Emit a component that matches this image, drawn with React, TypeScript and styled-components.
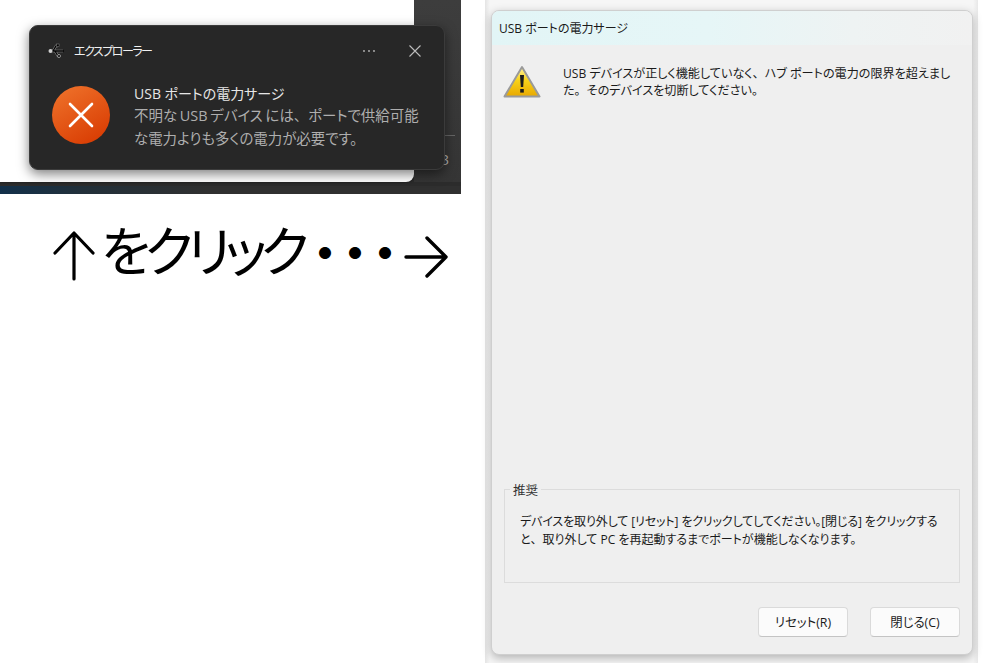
import { createGlobalStyle, styled } from 'styled-components';

const GlobalStyle = createGlobalStyle`
  html, body {
    margin: 0;
    padding: 0;
    background: #ffffff;
  }
  body {
    font-family: "Open Sans", "Noto Sans CJK JP", sans-serif;
    font-feature-settings: "palt";
  }
`;

const Page = styled.div`
  width: 999px;
  height: 663px;
  display: grid;
  grid-template-columns: 485px 493px;
  overflow: hidden;
`;

const LeftColumn = styled.div`
  display: flex;
  flex-direction: column;
`;

const Capture = styled.div`
  position: relative;
  width: 461px;
  height: 194px;
  display: flex;
  flex-direction: column;
  background: #2c2c2c;
`;

const CaptureMain = styled.div`
  flex: 1;
  display: flex;
  padding-bottom: 4px;
`;

const ExplorerWindow = styled.div`
  width: 414px;
  background: #ffffff;
  border-radius: 0 0 8px 0;
  box-shadow: 0 0 3px rgba(0, 0, 0, 0.5);
`;

const SidePane = styled.div`
  flex: 1;
  background: linear-gradient(#3d3d3d, #353535);
  display: flex;
  flex-direction: column;
  padding-top: 135px;
`;

const SideRule = styled.div`
  height: 1px;
  margin-right: 6px;
  background: #666666;
`;

const SideGlyph = styled.span`
  margin: 15px 0 0 27px;
  font-size: 14px;
  line-height: 18px;
  color: #b5b5b5;
`;

const Taskbar = styled.div`
  height: 8px;
  background: linear-gradient(90deg, #12304a 0, #22303a 18%, #303030 45%, #303030);
`;

const Toast = styled.div`
  position: absolute;
  left: 29px;
  top: 25px;
  width: 416px;
  height: 145px;
  box-sizing: border-box;
  padding: 13px 22px 0 18px;
  background: #272727;
  border: 1px solid #3b3b3b;
  border-radius: 9px;
  box-shadow: 0 4px 12px rgba(0, 0, 0, 0.5);
  display: flex;
  flex-direction: column;
`;

const ToastHeader = styled.div`
  display: flex;
  align-items: center;
  height: 24px;
  color: #f0f0f0;
  font-size: 12px;
`;

const AppName = styled.span`
  margin-left: 10px;
  flex: 1;
  letter-spacing: -1.5px;
`;

const ToastAction = styled.span`
  display: flex;
  width: 14px;
  margin-left: 32px;
  justify-content: center;
  color: #b8b8b8;
`;

const ToastBody = styled.div`
  display: flex;
  margin-top: 23px;
  padding-left: 4px;
  gap: 24px;
`;

const ToastCopy = styled.div`
  margin-top: -3px;
  white-space: nowrap;
`;

const ToastTitle = styled.div`
  color: #e6e6e6;
  font-size: 14px;
  line-height: 21px;
`;

const ToastText = styled.div`
  color: #aeaeae;
  font-size: 14.45px;
  line-height: 23px;
  word-spacing: -1px;
`;

const Punct = styled.span`
  font-feature-settings: normal;
`;

const Caption = styled.div`
  display: flex;
  align-items: flex-start;
  margin: 27px 0 0 52px;
  height: 60px;
  color: #000000;
  white-space: nowrap;
`;

const CaptionArrow = styled.svg<{ $top: number; $left: number }>`
  flex: none;
  margin-top: ${(p) => p.$top}px;
  margin-left: ${(p) => p.$left}px;
`;

const CaptionText = styled.span`
  margin-left: 5px;
  font-size: 54px;
  line-height: 60px;
  letter-spacing: -6.4px;
  font-weight: 400;
`;

const Dots = styled.span`
  margin-left: -1px;
  font-feature-settings: normal;
  letter-spacing: -17px;
  font-size: 47px;
  line-height: 64px;
  font-weight: 700;
`;

const Backdrop = styled.div`
  height: 663px;
  box-sizing: border-box;
  padding: 10px 5px 8px 6px;
  background: linear-gradient(90deg, #e4e4e4 0, #f6f6f6 1%, #f6f6f6 99%, #e8e8e8);
`;

const Dialog = styled.div`
  height: 645px;
  box-sizing: border-box;
  border: 1px solid #cfcfcf;
  border-radius: 8px;
  background: #efefef;
  box-shadow: 0 3px 10px rgba(0, 0, 0, 0.28);
  overflow: hidden;
  display: flex;
  flex-direction: column;
  color: #1a1a1a;
  font-size: 12px;
`;

const TitleBar = styled.div`
  height: 33px;
  flex: none;
  padding: 0 0 1px 7px;
  display: flex;
  align-items: center;
  background: linear-gradient(90deg, #e2f5f6 0, #e6f6f7 45%, #eef3f3 75%, #f1f1f1);
`;

const Message = styled.div`
  display: flex;
  flex: 1;
  padding: 20px 0 0 11px;
  gap: 22px;
`;

const MessageText = styled.div`
  font-size: 12.1px;
  line-height: 17px;
  white-space: nowrap;
`;

const Group = styled.fieldset`
  margin: 0 12px;
  height: 102px;
  box-sizing: border-box;
  padding: 16px 15px 0 15px;
  border: 1px solid #dcdcdc;
  font-size: 12px;
  line-height: 18px;
  white-space: nowrap;
`;

const GroupLegend = styled.legend`
  margin-left: -10px;
  padding: 0 3px;
  font-size: 12.5px;
  line-height: 16px;
  color: #333333;
  transform: translateY(2px);
`;

const GroupLine = styled.div<{ $tight?: boolean }>`
  letter-spacing: ${(p) => (p.$tight ? '-0.12px' : '0')};
`;

const Footer = styled.div`
  display: flex;
  justify-content: flex-end;
  gap: 22px;
  padding: 24px 12px 17px 0;
`;

const DialogButton = styled.button`
  width: 90px;
  height: 30px;
  padding: 0;
  background: #fbfbfb;
  border: 1px solid #dadada;
  border-bottom-color: #c4c4c4;
  border-radius: 4px;
  font: inherit;
  font-size: 12.4px;
  color: #1a1a1a;
`;

const IconSvg = styled.svg`
  flex: none;
`;

const UsbIcon = () => (
  <IconSvg width="16" height="16" viewBox="0 0 16 16" fill="none">
    <path d="M2 8h13M5 8l3-5h2M7 8l3 5h1" stroke="#8c8c8c" strokeWidth="2.400" />
    <path d="M2 8h13M5 8l3-5h2M7 8l3 5h1" stroke="#000000" strokeWidth="1.300" />
    <circle cx="2.500" cy="8" r="2" fill="#d0d0d0" />
    <rect x="8.500" y="1" width="2.600" height="2.600" fill="#000000" stroke="#8a8a8a" strokeWidth="0.5" />
    <circle cx="11" cy="13" r="1.500" fill="#000000" stroke="#e0e0e0" strokeWidth="0.6" />
    <path d="M15 6.500L16 8l-1 1.500z" fill="#000000" />
  </IconSvg>
);

const MoreIcon = () => (
  <IconSvg width="14" height="4" viewBox="0 0 14 4" fill="#b8b8b8">
    <circle cx="2" cy="2" r="0.9" />
    <circle cx="7" cy="2" r="0.9" />
    <circle cx="12" cy="2" r="0.9" />
  </IconSvg>
);

const CloseIcon = () => (
  <IconSvg width="12" height="12" viewBox="0 0 12 12" stroke="#bdbdbd" strokeWidth="1.1">
    <path d="M0.500 0.500l11 11M11.500 0.500l-11 11" />
  </IconSvg>
);

const ErrorIcon = () => (
  <IconSvg width="58" height="58" viewBox="0 0 58 58">
    <defs>
      <linearGradient id="err" x1="0.2" y1="0" x2="0.8" y2="1">
        <stop offset="0" stopColor="#ee7029" />
        <stop offset="1" stopColor="#d83b02" />
      </linearGradient>
    </defs>
    <circle cx="29" cy="29" r="29" fill="url(#err)" />
    <path d="M18 18l22 22M40 18L18 40" stroke="#ffffff" strokeWidth="2.600" strokeLinecap="round" />
  </IconSvg>
);

const WarningIcon = () => (
  <IconSvg width="38" height="34" viewBox="0 0 38 34">
    <defs>
      <linearGradient id="warn" x1="0" y1="0" x2="0" y2="1">
        <stop offset="0" stopColor="#fff3a0" />
        <stop offset="0.45" stopColor="#f8d21a" />
        <stop offset="1" stopColor="#e8a800" />
      </linearGradient>
    </defs>
    <path d="M19 2L36.500 31.500H1.500Z" fill="url(#warn)" stroke="#9a9a9a" strokeWidth="2" strokeLinejoin="round" />
    <path d="M17 10h4l-0.800 12h-2.400Z" fill="#1c1c1c" />
    <rect x="17.200" y="24" width="3.600" height="3.600" fill="#1c1c1c" />
  </IconSvg>
);

const ArrowUp = () => (
  <CaptionArrow $top={10} $left={0} width="44" height="50" viewBox="0 0 44 50" fill="none" stroke="#000" strokeWidth="3.200" strokeLinecap="round" strokeLinejoin="round">
    <path d="M22 2v46M3 22L22 2l19 20" />
  </CaptionArrow>
);

const ArrowRight = () => (
  <CaptionArrow $top={14} $left={12} width="46" height="44" viewBox="0 0 46 44" fill="none" stroke="#000" strokeWidth="3.400" strokeLinecap="round" strokeLinejoin="round">
    <path d="M2 22h40M23 3l19 19-19 19" />
  </CaptionArrow>
);

export default function App() {
  return (
    <Page>
      <GlobalStyle />
      <LeftColumn>
        <Capture>
          <CaptureMain>
            <ExplorerWindow />
            <SidePane>
              <SideRule />
              <SideGlyph>3</SideGlyph>
            </SidePane>
          </CaptureMain>
          <Taskbar />
          <Toast>
            <ToastHeader>
              <UsbIcon />
              <AppName>エクスプローラー</AppName>
              <ToastAction>
                <MoreIcon />
              </ToastAction>
              <ToastAction>
                <CloseIcon />
              </ToastAction>
            </ToastHeader>
            <ToastBody>
              <ErrorIcon />
              <ToastCopy>
                <ToastTitle>USB ポートの電力サージ</ToastTitle>
                <ToastText>
                  不明な USB デバイス には<Punct>、</Punct>ポートで供給可能
                  <br />
                  な電力よりも多くの電力が必要です。
                </ToastText>
              </ToastCopy>
            </ToastBody>
          </Toast>
        </Capture>
        <Caption>
          <ArrowUp />
          <CaptionText>をクリック</CaptionText>
          <Dots>・・・</Dots>
          <ArrowRight />
        </Caption>
      </LeftColumn>
      <Backdrop>
        <Dialog>
          <TitleBar>USB ポートの電力サージ</TitleBar>
          <Message>
            <WarningIcon />
            <MessageText>
              USB デバイスが正しく機能していなく<Punct>、</Punct>ハブ ポートの電力の限界を超えまし
              <br />
              た<Punct>。</Punct>そのデバイスを切断してください。
            </MessageText>
          </Message>
          <Group>
            <GroupLegend>推奨</GroupLegend>
            <GroupLine $tight>デバイスを取り外して [リセット] をクリックしてしてください。[閉じる] をクリックする</GroupLine>
            <GroupLine>
              と<Punct>、</Punct>取り外して PC を再起動するまでポートが機能しなくなります。
            </GroupLine>
          </Group>
          <Footer>
            <DialogButton>リセット(R)</DialogButton>
            <DialogButton>閉じる(C)</DialogButton>
          </Footer>
        </Dialog>
      </Backdrop>
    </Page>
  );
}
